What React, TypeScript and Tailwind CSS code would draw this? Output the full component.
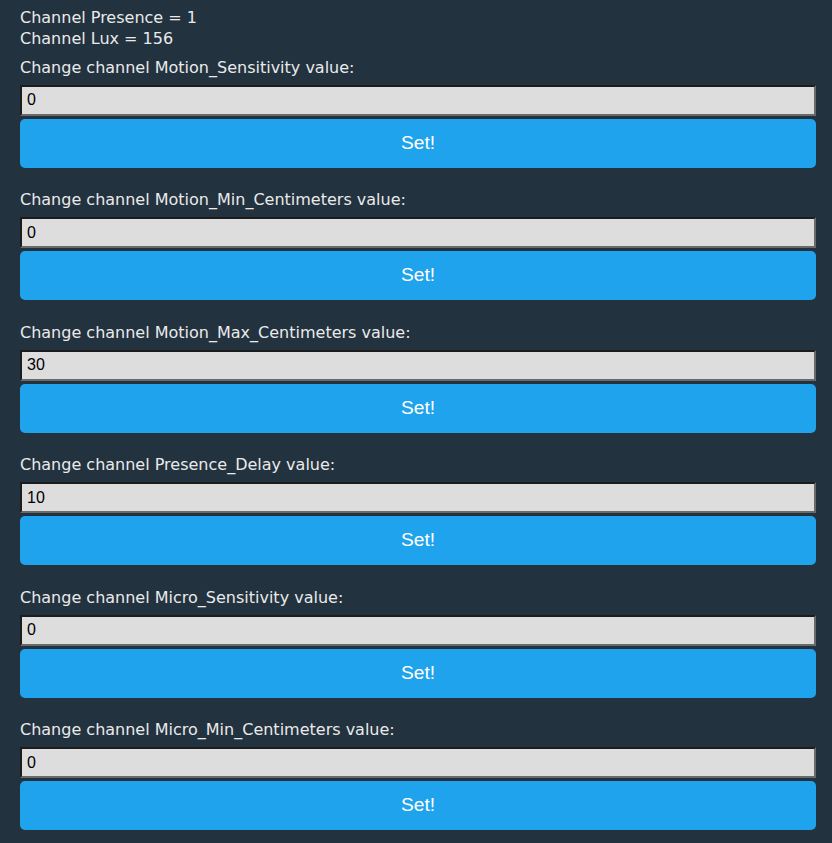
import React, { useState } from "react";

const channels = [
  { name: "Motion_Sensitivity", value: "0" },
  { name: "Motion_Min_Centimeters", value: "0" },
  { name: "Motion_Max_Centimeters", value: "30" },
  { name: "Presence_Delay", value: "10" },
  { name: "Micro_Sensitivity", value: "0" },
  { name: "Micro_Min_Centimeters", value: "0" },
];

function ChannelForm({ name, value }: { name: string; value: string }) {
  const [val, setVal] = useState(value);
  return (
    <div className="flex flex-col">
      <label className="leading-[21px] text-[16px]">Change channel {name} value:</label>
      <input
        value={val}
        onChange={(e) => setVal(e.target.value)}
        className="mt-[7px] h-[31px] w-full bg-[#dddddd] text-black px-[5px] border-2 border-t-[#1c1c1c] border-l-[#1c1c1c] border-b-[#6a6a6a] border-r-[#6a6a6a] outline-none text-[16px] font-['Liberation_Sans',Arial,sans-serif]"
      />
      <button className="mt-[3px] h-[49px] w-full rounded-[5px] bg-[#1fa3ec] text-white text-[19.2px] font-['Liberation_Sans',Arial,sans-serif]">
        Set!
      </button>
    </div>
  );
}

export default function App() {
  return (
    <div className="min-h-[843px] w-full bg-[#22323f] text-[#eaeaea] font-['DejaVu_Sans',Verdana,sans-serif] pl-[20px] pr-[16px] pt-[7px] pb-[14px]">
      <div className="leading-[21px] text-[16px]">Channel Presence = 1</div>
      <div className="leading-[21px] text-[16px]">Channel Lux = 156</div>
      <div className="mt-[7.5px] flex flex-col gap-[21.5px]">
        {channels.map((c) => (
          <ChannelForm key={c.name} name={c.name} value={c.value} />
        ))}
      </div>
    </div>
  );
}
